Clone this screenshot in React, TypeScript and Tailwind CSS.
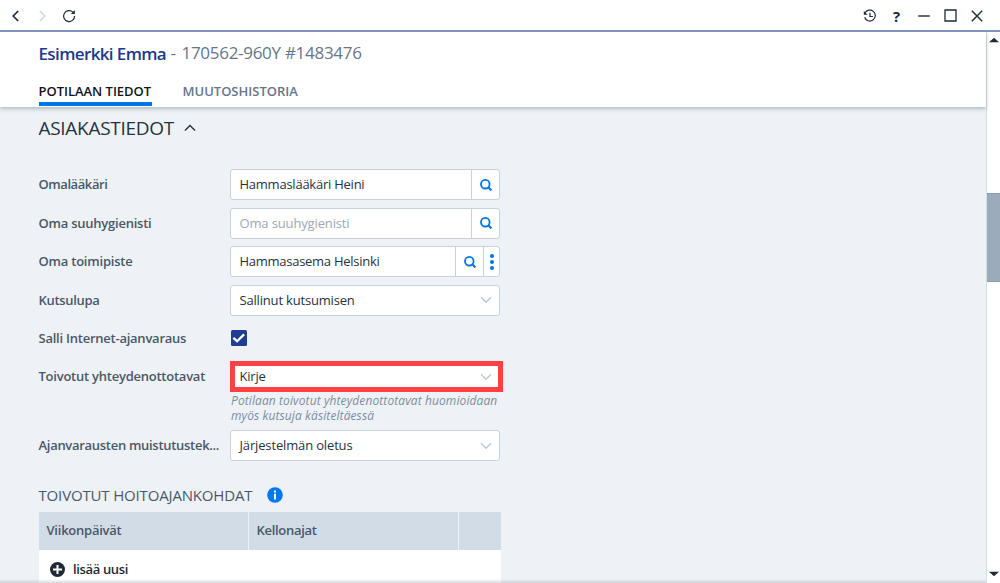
import type { ReactNode } from 'react';

function SearchIcon() {
  return (
    <svg className="ml-px" width="12" height="12" viewBox="0 0 12 12" fill="none" stroke="#0073e6" strokeWidth="1.8">
      <circle cx="5.3" cy="5.2" r="4.3" />
      <path d="M8.3 8.3 11.4 11.4" strokeWidth="2.1" />
    </svg>
  );
}

function ChevronDown() {
  return (
    <svg width="12" height="8" viewBox="0 0 12 8" fill="none" stroke="#b9c6d4" strokeWidth="1.3">
      <path d="M1 1.3 6 6.3 11 1.3" />
    </svg>
  );
}

function Row({ label, children, className }: { label: ReactNode; children: ReactNode; className: string }) {
  return (
    <div className={'flex ' + className}>
      <div className="h-[31px] w-[191.5px] shrink-0 whitespace-nowrap text-[13px] font-semibold leading-[31px] text-[#4a5866]">{label}</div>
      {children}
    </div>
  );
}

const field = 'flex h-[31px] w-[270px] rounded-[3px] border border-[#c6d1dc] bg-white text-[13px] leading-[29px] text-[#26323d]';

function Select({ children }: { children: ReactNode }) {
  return (
    <div className={field + ' items-center justify-between pl-[8.5px] pr-[7px]'}>
      {children}
      <ChevronDown />
    </div>
  );
}

export default function App() {
  return (
    <div className="flex h-[583px] w-[1000px] flex-col overflow-hidden bg-white font-['Open_Sans','Noto_Sans',sans-serif]">
      <header className="flex h-8 shrink-0 items-center justify-between border-b-2 border-[#8494c2] pl-[10px] pr-[17px] pt-px text-[#1f2a36]">
        <div className="flex items-center">
          <svg width="12" height="12" viewBox="0 0 12 12" fill="none" stroke="currentColor" strokeWidth="1.7"><path d="M8.2 1 3.2 6l5 5" /></svg>
          <svg className="ml-[15px]" width="12" height="12" viewBox="0 0 12 12" fill="none" stroke="#ccd8e6" strokeWidth="1.5"><path d="M2.8 1 7.8 6l-5 5" /></svg>
          <svg className="ml-[13px]" width="14" height="14" viewBox="0 0 14 14" fill="none" stroke="currentColor" strokeWidth="1.2">
            <path d="M12.6 7A5.5 5.5 0 1 1 10.9 3.1L12 4.2" />
            <path d="M12.8 1v4H8.8z" fill="currentColor" stroke="none" />
          </svg>
        </div>
        <div className="flex items-center">
          <svg width="14" height="14" viewBox="0 0 14 14" fill="none" stroke="currentColor" strokeWidth="1.2">
            <path d="M1.8 4.3A5.5 5.5 0 1 1 1.6 8.3" />
            <path d="M7 3.8v3.7h3" />
            <path d="M.8 2v3.8h3.8z" fill="currentColor" stroke="none" />
          </svg>
          <span className="ml-4 w-[10px] text-[15px] font-bold leading-[20px]">?</span>
          <svg className="ml-[15px]" width="12" height="12" viewBox="0 0 12 12" stroke="currentColor" strokeWidth="1.4"><path d="M.2 6h11.6" /></svg>
          <svg className="ml-[14px]" width="13" height="13" viewBox="0 0 13 13" fill="none" stroke="currentColor" strokeWidth="1.3"><path d="M1 1h11v11H1z" /></svg>
          <svg className="ml-[14px]" width="12" height="12" viewBox="0 0 12 12" stroke="currentColor" strokeWidth="1.4"><path d="m.8.8 10.4 10.4M11.2.8.8 11.2" /></svg>
        </div>
      </header>

      <div className="flex min-h-0 flex-1">
        <div className="flex w-[986px] shrink-0 flex-col">
          <div className="z-10 h-[75px] shrink-0 bg-white pl-[38.5px] shadow-[0_2px_4px_rgba(90,105,115,0.4)]">
            <div className="flex h-[42px] items-center whitespace-pre">
              <span className="w-[132px] pt-px text-[17px] font-semibold tracking-[-0.62px] text-[#1c398e]">Esimerkki Emma</span>
              <span className="w-[11px] text-[17px] text-[#66768a]">-</span>
              <span className="text-[17px] tracking-[-0.29px] text-[#66768a]">170562-960Y #1483476</span>
            </div>
            <nav className="flex h-[32px] gap-[31px] text-[13px] font-semibold leading-[35px]">
              <span className="h-[32px] w-[113px] whitespace-nowrap border-b-4 border-[#0073e6] tracking-[-0.03px] text-[#10151c]">POTILAAN TIEDOT</span>
              <span className="text-[#66768a]">MUUTOSHISTORIA</span>
            </nav>
          </div>

          <main className="relative min-h-0 flex-1 overflow-hidden bg-[#eef2f7] pl-[38.5px]">
            <div className="flex h-[62px] items-start gap-[10px] pt-[7px]">
              <h2 className="text-[19px] leading-7 tracking-[-0.29px] text-[#26323d]">ASIAKASTIEDOT</h2>
              <svg className="mt-[10px]" width="12" height="8" viewBox="0 0 12 8" fill="none" stroke="#26323d" strokeWidth="1.4"><path d="M1 6.5 6 1.5l5 5" /></svg>
            </div>

            <Row className="h-[38.5px]" label={<span className="tracking-[-0.42px]">Omalääkäri</span>}>
              <div className={field}>
                <span className="flex-1 pl-[8.5px] tracking-[-0.24px]">Hammaslääkäri Heini</span>
                <span className="flex w-[28px] items-center justify-center border-l border-[#c6d1dc]"><SearchIcon /></span>
              </div>
            </Row>
            <Row className="h-[38.5px]" label={<span className="tracking-[-0.23px]">Oma suuhygienisti</span>}>
              <div className={field}>
                <span className="flex-1 pl-[8.5px] tracking-[-0.14px] text-[#9aa9b8]">Oma suuhygienisti</span>
                <span className="flex w-[28px] items-center justify-center border-l border-[#c6d1dc]"><SearchIcon /></span>
              </div>
            </Row>
            <Row className="h-[38.5px]" label={<span className="tracking-[-0.21px]">Oma toimipiste</span>}>
              <div className={field}>
                <span className="flex-1 pl-[8.5px] tracking-[-0.27px]">Hammasasema Helsinki</span>
                <span className="flex w-[28px] items-center justify-center border-l border-[#c6d1dc]"><SearchIcon /></span>
                <span className="flex w-[16px] items-center justify-center border-l border-[#c6d1dc]">
                  <svg width="4" height="16" viewBox="0 0 4 16" fill="#0073e6"><circle cx="2" cy="2" r="2" /><circle cx="2" cy="8" r="2" /><circle cx="2" cy="14" r="2" /></svg>
                </span>
              </div>
            </Row>
            <Row className="h-[38.5px]" label={<span className="tracking-[-0.32px]">Kutsulupa</span>}>
              <Select><span className="tracking-[-0.18px]">Sallinut kutsumisen</span></Select>
            </Row>
            <Row className="h-[38px]" label={<span className="tracking-[-0.24px]">Salli Internet-ajanvaraus</span>}>
              <svg className="mt-[7px] ml-[0.5px]" width="16" height="16" viewBox="0 0 16 16">
                <rect width="16" height="16" rx="1.5" fill="#1f3d91" />
                <path d="m2.3 7.8 3.8 3.4 7-6.8" fill="none" stroke="#fff" strokeWidth="2.3" />
              </svg>
            </Row>
            <Row className="h-[69px]" label={<span className="tracking-[-0.24px]">Toivotut yhteydenottotavat</span>}>
              <div className="w-[273px]">
                <div className="flex h-[31px] items-center justify-between border-5 border-[#ff4141] bg-white pl-[4.5px] pr-[6px] text-[13px] text-[#26323d]">
                  <span className="pt-px tracking-[-0.2px]">Kirje</span>
                  <ChevronDown />
                </div>
                <p className="whitespace-nowrap pl-px pt-px text-[12px] italic leading-[15px] tracking-[0.1px] text-[#7d8c9b]">Potilaan toivotut yhteydenottotavat huomioidaan<br />myös kutsuja käsiteltäessä</p>
              </div>
            </Row>
            <Row className="h-[49px]" label={<span className="tracking-[-0.29px]">Ajanvarausten muistutustek...</span>}>
              <Select><span className="tracking-[-0.15px]">Järjestelmän oletus</span></Select>
            </Row>

            <div className="flex h-[33px] items-center gap-[15px]">
              <h3 className="pb-[2px] text-[15px] leading-5 tracking-[-0.16px] text-[#4a5866]">TOIVOTUT HOITOAJANKOHDAT</h3>
              <svg className="-mt-px" width="16" height="16" viewBox="0 0 16 16"><circle cx="8" cy="8" r="7.8" fill="#0078f0" /><path d="M7 3.5h2v2H7zM7 6.8h2v5.7H7z" fill="#fff" /></svg>
            </div>
            <div className="w-[462px]">
              <div className="flex h-[38px] gap-px text-[13px] font-semibold leading-[37px] text-[#4a5866]">
                <div className="w-[209px] bg-[#d2dce6] pl-2 tracking-[-0.24px]">Viikonpäivät</div>
                <div className="w-[209px] bg-[#d2dce6] pl-2 tracking-[-0.3px]">Kellonajat</div>
                <div className="flex-1 bg-[#d2dce6]" />
              </div>
              <div className="flex h-[38px] items-center gap-2 bg-white pl-[11.5px] text-[13px] font-semibold tracking-[-0.35px] text-[#1f2a36]">
                <svg width="15" height="15" viewBox="0 0 15 15"><circle cx="7.5" cy="7.5" r="7.5" fill="#1f2a36" /><path d="M7.5 3v9M3 7.5h9" stroke="#fff" strokeWidth="2" /></svg>
                <span className="pt-px">lisää uusi</span>
              </div>
            </div>
            <div className="absolute inset-x-0 bottom-0 h-1 bg-linear-to-b from-transparent to-[#9ba3ab]/40" />
          </main>
        </div>

        <aside className="flex flex-1 flex-col items-center border-l border-[#d2dee8]">
          <svg className="mt-[5px] ml-px" width="10" height="6" viewBox="0 0 10 6"><path d="M0 5.2 5 .7l5 4.5z" fill="#1f2a36" /></svg>
          <div className="mt-[150px] h-[89px] w-full border-y border-[#8a9bac] bg-[#9babbb]" />
          <svg className="mt-auto mb-[6px] ml-px" width="10" height="6" viewBox="0 0 10 6"><path d="M0 .8h10L5 5.3z" fill="#1f2a36" /></svg>
        </aside>
      </div>
    </div>
  );
}
